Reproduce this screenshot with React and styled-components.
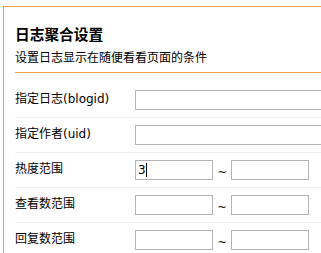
import React from "react";
import styled, { createGlobalStyle } from "styled-components";

const GlobalStyle = createGlobalStyle`
  html, body {
    margin: 0;
    padding: 0;
    background: #fff;
    overflow: hidden;
  }
  body {
    font-family: "DejaVu Sans", "Noto Sans CJK SC", sans-serif;
    font-size: 12px;
    color: #000;
  }
`;

const Page = styled.div`
  width: 321px;
  height: 253px;
  padding: 6px 0 0 3px;
  box-sizing: border-box;
  overflow: hidden;
`;

const Panel = styled.div`
  border-top: 1px solid #e5a04c;
  border-left: 1px solid #e5a04c;
  padding: 0 0 0 11px;
  width: 400px;
`;

const Header = styled.div`
  padding: 17px 0 6px;
  border-bottom: 1px solid #e5a04c;
`;

const Title = styled.h2`
  margin: 0;
  font-size: 14.7px;
  line-height: 20px;
  font-weight: bold;
  font-family: "Noto Sans CJK SC", sans-serif;
`;

const Subtitle = styled.p`
  margin: 4px 0 0;
  font-size: 12px;
  line-height: 18px;
  font-family: "Noto Sans CJK SC", sans-serif;
`;

const Form = styled.div`
  margin-top: 10px;
`;

const Row = styled.div`
  display: grid;
  grid-template-columns: 120px 1fr;
  align-items: center;
  height: 34px;
  border-bottom: 1px solid #efefef;
`;

const Label = styled.label`
  font-size: 12px;
  line-height: 16px;
  padding-bottom: 2px;
`;

const Field = styled.div`
  display: flex;
  align-items: center;
`;

const InputWrap = styled.div`
  position: relative;
  display: flex;
`;

const TextInput = styled.input`
  box-sizing: border-box;
  width: ${(p) => (p.$short ? "78px" : "240px")};
  height: 20px;
  margin: 0;
  padding: 0 2px;
  border: 1px solid #b4b4b4;
  font-family: "DejaVu Sans", sans-serif;
  font-size: 12px;
  color: #000;
  outline: none;
  background: #fff;
  caret-color: transparent;
`;

/* text caret drawn after the typed value */
const Caret = styled.span`
  position: absolute;
  left: ${(p) => p.$left}px;
  top: 3px;
  width: 1px;
  height: 14px;
  background: #000;
`;

const Tilde = styled.span`
  width: 18px;
  text-align: center;
  font-size: 11px;
  padding-top: 4px;
`;

const rows = [
  { label: "指定日志(blogid)" },
  { label: "指定作者(uid)" },
  { label: "热度范围", range: true, from: "3" },
  { label: "查看数范围", range: true },
  { label: "回复数范围", range: true },
];

export default function App() {
  return (
    <Page>
      <GlobalStyle />
      <Panel>
        <Header>
          <Title>日志聚合设置</Title>
          <Subtitle>设置日志显示在随便看看页面的条件</Subtitle>
        </Header>
        <Form>
          {rows.map((r, i) => (
            <Row key={i}>
              <Label>{r.label}</Label>
              <Field>
                {r.range ? (
                  <>
                    <InputWrap>
                      <TextInput $short defaultValue={r.from || ""} />
                      {r.from && <Caret $left={3 + r.from.length * 8} />}
                    </InputWrap>
                    <Tilde>~</Tilde>
                    <TextInput $short />
                  </>
                ) : (
                  <TextInput />
                )}
              </Field>
            </Row>
          ))}
        </Form>
      </Panel>
    </Page>
  );
}
